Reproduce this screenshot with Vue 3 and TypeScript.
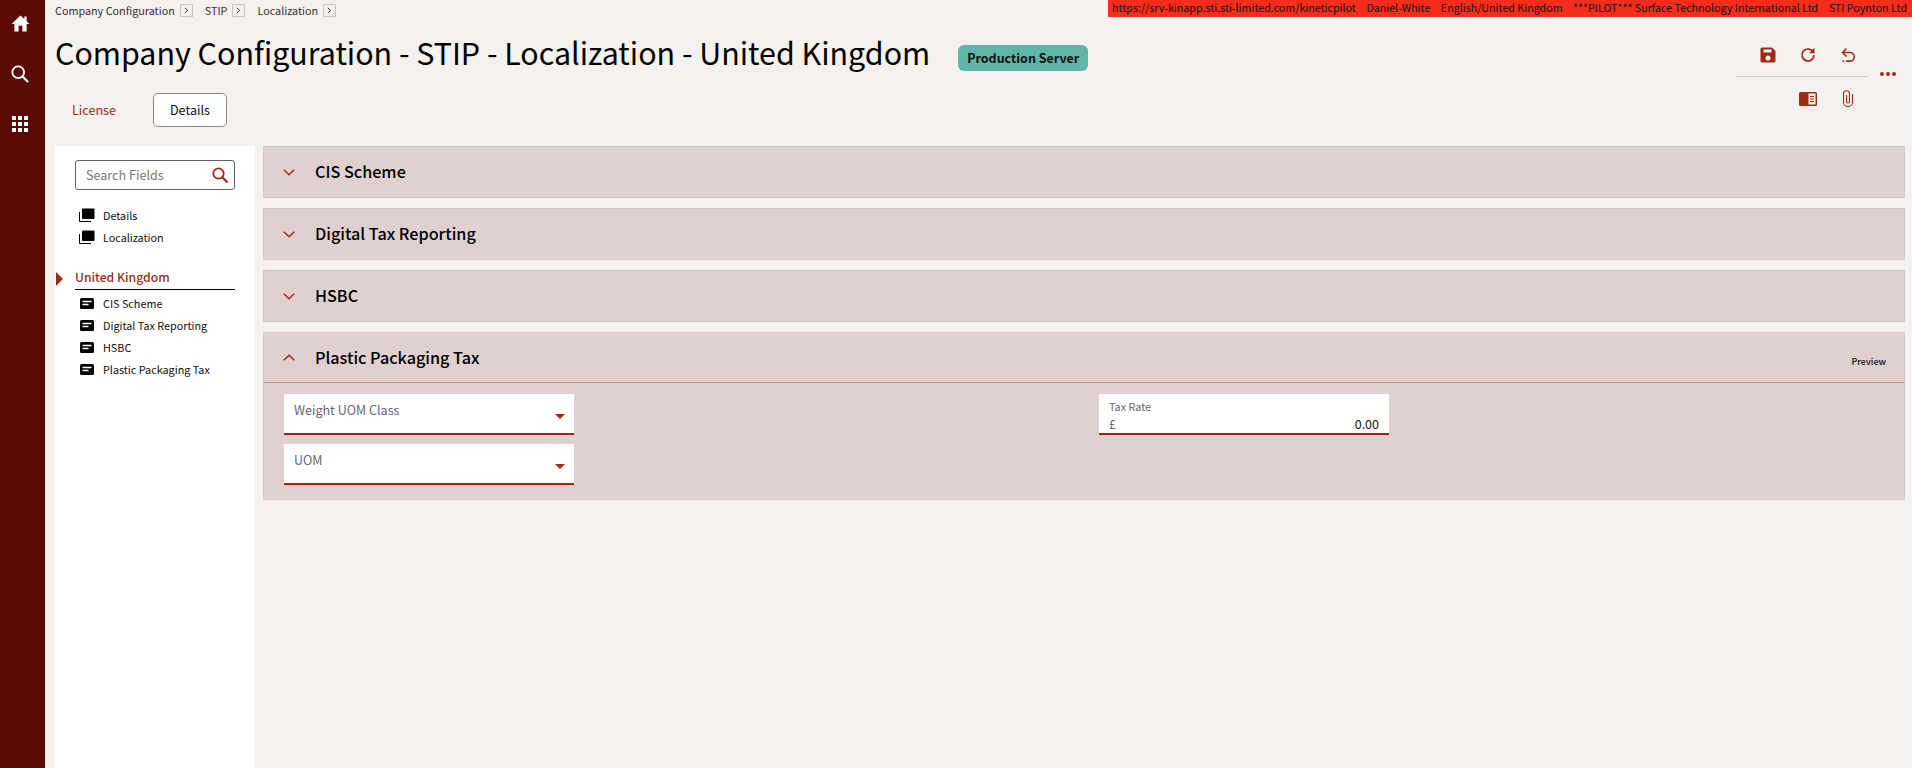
<script setup lang="ts">
const crumbs = ['Company Configuration', 'STIP', 'Localization']
const navTop = ['Details', 'Localization']
const navSub = ['CIS Scheme', 'Digital Tax Reporting', 'HSBC', 'Plastic Packaging Tax']
const closed = ['CIS Scheme', 'Digital Tax Reporting', 'HSBC']
const infos = [
  'https://srv-kinapp.sti.sti-limited.com/kineticpilot',
  'Daniel-White',
  'English/United Kingdom',
  '***PILOT*** Surface Technology International Ltd',
  'STI Poynton Ltd',
]
</script>

<template>
  <div class="app">
    <aside class="rail">
      <svg class="rail-icon" viewBox="0 0 20 18" width="19" height="17"><path d="M10 0.5 0.5 9.5H3.5V17.5H8V11.5H12V17.5H16.500V9.500H19.500L16.500 6.700V1.500H14V4.300Z" fill="#fff" /></svg>
      <svg class="rail-icon" viewBox="0 0 20 20" width="18" height="18"><circle cx="8" cy="8" r="6.500" fill="none" stroke="#fff" stroke-width="2" /><path d="M12.500 12.500 19 19" stroke="#fff" stroke-width="2.400" /></svg>
      <svg class="rail-icon" viewBox="0 0 16 16" width="16" height="16"><g fill="#fff"><rect x="0" y="0" width="4" height="4" /><rect x="6" y="0" width="4" height="4" /><rect x="12" y="0" width="4" height="4" /><rect x="0" y="6" width="4" height="4" /><rect x="6" y="6" width="4" height="4" /><rect x="12" y="6" width="4" height="4" /><rect x="0" y="12" width="4" height="4" /><rect x="6" y="12" width="4" height="4" /><rect x="12" y="12" width="4" height="4" /></g></svg>
    </aside>

    <div class="page">
      <div class="topline">
        <nav class="crumbs">
          <span v-for="c in crumbs" :key="c" class="crumb">
            {{ c }}
            <span class="crumb-btn">
              <svg viewBox="0 0 6 8" width="5" height="7"><path d="M1 1 4.500 4 1 7" fill="none" stroke="#333" stroke-width="1.200" /></svg>
            </span>
          </span>
        </nav>
        <div class="infobar">
          <span v-for="i in infos" :key="i">{{ i }}</span>
        </div>
      </div>

      <header class="head">
        <div class="head-left">
          <div class="title-row">
            <h1>Company Configuration - STIP - Localization - United Kingdom</h1>
            <span class="badge">Production Server</span>
          </div>
          <div class="tabs">
            <a class="tab">License</a>
            <a class="tab active">Details</a>
          </div>
        </div>
        <div class="tools">
          <div class="tool-rows">
            <div class="tool-row upper">
              <svg viewBox="0 0 16 16" width="16" height="16"><path fill-rule="evenodd" d="M2 0.500H12L15.500 4V14A1.500 1.500 0 0 1 14 15.500H2A1.500 1.500 0 0 1 .5 14V2A1.500 1.500 0 0 1 2 .5ZM3.500 2.500V5.500H11.500V2.500ZM8 8.500A2.500 2.500 0 1 0 8 13.500 2.500 2.500 0 1 0 8 8.500Z" fill="#a02b14" /></svg>
              <svg viewBox="0 0 16 16" width="16" height="16"><path d="M13.300 5.200A6 6 0 1 0 14 8" fill="none" stroke="#a02b14" stroke-width="1.700" /><path d="M14.500 0.800V6.200H9.200Z" fill="#a02b14" /></svg>
              <svg viewBox="0 0 16 16" width="16" height="16"><path d="M3 5.500H10A4.300 4.300 0 0 1 10 14.100H6" fill="none" stroke="#a02b14" stroke-width="1.600" /><path d="M6.500 1.500 2.500 5.500 6.500 9.500" fill="none" stroke="#a02b14" stroke-width="1.600" /><path d="M2.500 13.300H4.200V15H2.500Z" fill="#a02b14" /></svg>
            </div>
            <div class="tool-row lower">
              <svg viewBox="0 0 18 14" width="18" height="14"><rect x="0" y="0" width="18" height="14" rx="1.500" fill="#a02b14" /><rect x="9.500" y="1.500" width="7" height="11" fill="#f5f1ee" /><path d="M11 4.500H15M11 7H15M11 9.500H15" stroke="#a02b14" stroke-width="1.200" /></svg>
              <svg viewBox="0 0 12 17" width="12" height="17"><path d="M10.500 4V12A4.500 4.500 0 0 1 1.500 12V3.800A2.800 2.800 0 0 1 7.500 3.800V11.500A1.500 1.500 0 0 1 4.500 11.500V5" fill="none" stroke="#a02b14" stroke-width="1.100" /></svg>
            </div>
          </div>
          <svg class="dots" viewBox="0 0 16 4" width="16" height="4"><circle cx="2" cy="2" r="2" fill="#a02b14" /><circle cx="8" cy="2" r="2" fill="#a02b14" /><circle cx="14" cy="2" r="2" fill="#a02b14" /></svg>
        </div>
      </header>

      <div class="body">
        <section class="panel">
          <div class="search">
            <span class="search-text">Search Fields</span>
            <svg viewBox="0 0 16 16" width="16" height="16"><circle cx="6.500" cy="6.500" r="5.200" fill="none" stroke="#a02b14" stroke-width="1.800" /><path d="M10.300 10.300 15.500 15.500" stroke="#a02b14" stroke-width="2.200" /></svg>
          </div>
          <ul class="nav-top">
            <li v-for="n in navTop" :key="n">
              <svg viewBox="0 0 16 14" width="16" height="14"><path d="M.5 4V13.500H12" fill="none" stroke="#000" stroke-width="1" /><rect x="3" y="0.500" width="12.500" height="10.500" rx="1" fill="#000" /></svg>
              {{ n }}
            </li>
          </ul>
          <div class="nav-head">
            <svg class="caret" viewBox="0 0 7 14" width="7" height="14"><path d="M0 0 7 7 0 14Z" fill="#a02b14" /></svg>
            United Kingdom
          </div>
          <ul class="nav-sub">
            <li v-for="n in navSub" :key="n">
              <svg viewBox="0 0 14 11" width="14" height="11"><rect width="14" height="11" rx="1.500" fill="#000" /><path d="M2.500 3.500H11.500M2.500 6.500H8.500" stroke="#fff" stroke-width="1.500" /></svg>
              {{ n }}
            </li>
          </ul>
        </section>

        <main class="content">
          <div v-for="c in closed" :key="c" class="acc">
            <div class="acc-head">
              <svg viewBox="0 0 12 7" width="12" height="7"><path d="M.8.8 6 5.800 11.200.8" fill="none" stroke="#a02b14" stroke-width="1.500" /></svg>
              <h2>{{ c }}</h2>
            </div>
          </div>
          <div class="acc open">
            <div class="acc-head bar">
              <svg viewBox="0 0 12 7" width="12" height="7"><path d="M.8 6.200 6 1.200 11.200 6.200" fill="none" stroke="#a02b14" stroke-width="1.500" /></svg>
              <h2>Plastic Packaging Tax</h2>
              <span class="preview">Preview</span>
            </div>
            <div class="fields">
              <div class="col">
                <div class="field select">
                  <span>Weight UOM Class</span>
                  <i class="tri"></i>
                </div>
                <div class="field select">
                  <span>UOM</span>
                  <i class="tri"></i>
                </div>
              </div>
              <div class="col">
                <div class="field money">
                  <label>Tax Rate</label>
                  <div class="money-row"><span class="cur">£</span><span class="val">0.00</span></div>
                </div>
              </div>
            </div>
          </div>
        </main>
      </div>
    </div>
  </div>
</template>

<style>
html, body { margin: 0; background: #f5f1ee; }
</style>

<style scoped>
.app {
  display: flex;
  height: 768px;
  overflow: hidden;
  background: #f5f1ee;
  color: #000;
  font-family: "Noto Sans CJK JP", "Noto Sans", sans-serif;
}
.rail {
  width: 45px;
  flex: none;
  background: #5c0a05;
  display: flex;
  flex-direction: column;
  align-items: center;
  padding: 15px 5px 0 0;
  box-sizing: border-box;
}
.rail-icon { margin-bottom: 33px; }
.page { flex: 1; min-width: 0; display: flex; flex-direction: column; }
.topline { height: 17px; display: flex; justify-content: space-between; flex: none; }
.crumbs { display: flex; padding: 3px 0 0 10px; font-size: 10.800px; line-height: 13px; color: #333; }
.crumb { display: flex; align-items: center; gap: 5px; margin-right: 12px; }
.crumb-btn {
  width: 13px; height: 13px; box-sizing: border-box;
  border: 1px solid #c9c5c2; background: #f5f1ee;
  display: flex; align-items: center; justify-content: center;
}
.infobar {
  width: 804px; height: 17px; background: #f62d1b; box-sizing: border-box;
  padding-left: 4px; display: flex; gap: 10.500px; white-space: nowrap; overflow: hidden;
  font-size: 10.700px; line-height: 15px; color: #111;
}
.head { display: flex; justify-content: space-between; height: 129px; flex: none; box-sizing: border-box; padding-left: 10px; }
.title-row { display: flex; align-items: flex-start; height: 42px; margin-top: 14px; }
h1 { margin: 0; font-size: 30.400px; font-weight: 400; line-height: 42px; white-space: nowrap; }
.badge {
  margin: 14px 0 0 28px; width: 130px; height: 26px; box-sizing: border-box;
  background: #5fb5a8; border-radius: 6px;
  font-size: 12.500px; font-weight: 700; line-height: 26px; text-align: center; color: #111;
}
.tabs { display: flex; align-items: center; margin-top: 20px; }
.tab { font-size: 12.600px; line-height: 32px; color: #96301e; }
.tab:first-child { margin: 0 37px 0 17px; }
.tab.active {
  width: 74px; height: 34px; box-sizing: border-box; border: 1px solid #8a8684; border-radius: 5px;
  background: #fff; color: #111; text-align: center;
}
.tools { display: flex; width: 176px; flex: none; padding-top: 30px; box-sizing: border-box; }
.tool-rows { width: 132px; }
.tool-row { display: flex; justify-content: flex-end; align-items: center; padding-right: 12px; gap: 24px; }
.upper { height: 29px; align-items: flex-start; border-bottom: 1px solid #cbc8c5; }
.lower { padding-top: 13px; gap: 25px; padding-right: 14px; }
.dots { margin: 25px 0 0 12px; }
.body { flex: 1; display: flex; min-height: 0; padding-left: 10px; }
.panel { width: 200px; flex: none; background: #fff; padding: 14px 20px 0 20px; box-sizing: border-box; }
.search {
  height: 30px; box-sizing: border-box; border: 1px solid #66605e; border-radius: 3px;
  display: flex; justify-content: space-between; align-items: center; padding: 0 6px 0 10px;
  font-size: 12.600px; color: #777;
}
.search-text { margin-bottom: 1px; }
ul { list-style: none; margin: 0; padding: 0; }
li { display: flex; align-items: center; font-size: 10.800px; line-height: 22px; color: #111; }
.nav-top { margin-top: 14px; }
.nav-top li svg { margin: 0 8px 0 4px; }
.nav-head {
  position: relative; margin-top: 16px; height: 26px; box-sizing: border-box;
  border-bottom: 1px solid #000; font-size: 12.200px; font-weight: 500; line-height: 27px; color: #96301e;
}
.caret { position: absolute; left: -19px; top: 8px; }
.nav-sub { margin-top: 2px; }
.nav-sub li svg { margin: 0 9px 0 5px; }
.content { flex: 1; min-width: 0; padding: 0 7px 0 8px; display: flex; flex-direction: column; gap: 10px; }
.acc { background: #e0d0d0; border: 1px solid #cfc9c8; box-sizing: border-box; }
.acc-head { height: 50px; display: flex; align-items: center; padding-left: 19px; }
.acc-head.bar { height: 49px; border-bottom: 1px solid #cf8f88; }
h2 { margin: 0 0 2px 20px; font-size: 16.200px; font-weight: 500; line-height: 24px; }
.preview { margin-left: auto; margin-right: 18px; margin-top: 8px; font-size: 9px; font-weight: 500; color: #111; }
.fields { display: flex; padding: 11px 0 14px 20px; }
.col { width: 815px; flex: none; display: flex; flex-direction: column; gap: 9px; }
.field { height: 41px; background: #fff; border-bottom: 2px solid #a8200d; box-sizing: border-box; }
.select { width: 290px; position: relative; padding: 7px 10px; font-size: 12.550px; line-height: 18px; color: #667; }
.tri {
  position: absolute; right: 9px; top: 20px; width: 0; height: 0;
  border-left: 5px solid transparent; border-right: 5px solid transparent; border-top: 5px solid #a02b14;
}
.money { width: 290px; padding: 4px 10px 0 10px; }
.money label { display: block; font-size: 10.800px; line-height: 16px; color: #666; }
.money-row { display: flex; justify-content: space-between; font-size: 12.500px; line-height: 19px; }
.cur { color: #666; }
.val { color: #111; }
</style>
